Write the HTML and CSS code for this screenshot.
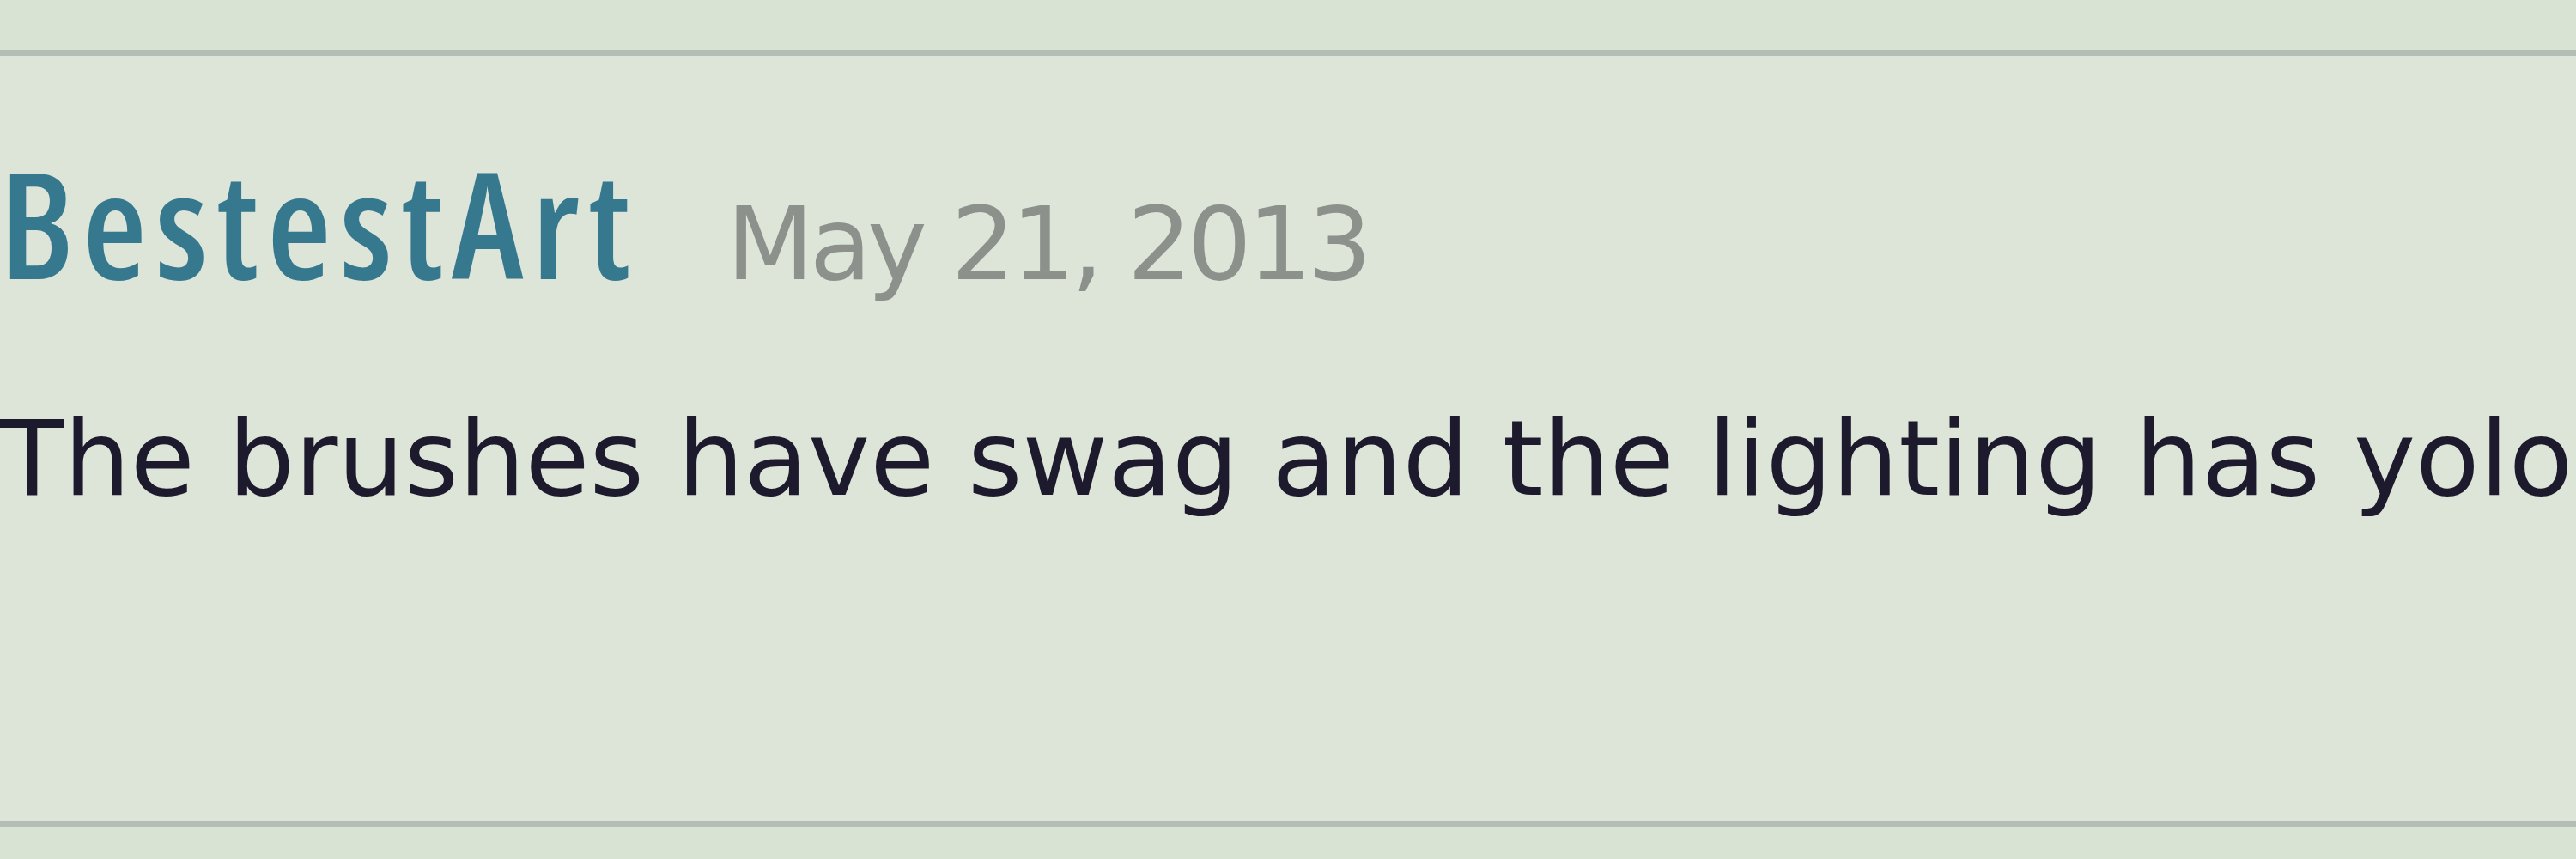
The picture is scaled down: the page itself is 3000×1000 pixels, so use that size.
FILE: index.html
```html
<!DOCTYPE html>
<html>
<head>
<meta charset="utf-8">
<link rel="stylesheet" href="styles.css">
</head>
<body>
<div class="page">
  <div class="above"></div>
  <div class="comment">
    <div class="comment-head">
      <span class="author">BestestArt</span>
      <span class="date">May 21, 2013</span>
    </div>
    <p class="comment-body">The brushes have swag and the lighting has yolo</p>
  </div>
  <div class="below"></div>
</div>
</body>
</html>
```
FILE: styles.css
```css
html, body {
  margin: 0;
  padding: 0;
  background: #dae3d5;
}
.page {
  width: 3000px;
  height: 1000px;
  overflow: hidden;
  display: flex;
  flex-direction: column;
}
.above {
  height: 58px;
  background: #d9e3d3;
}
.comment {
  background: #dde4d8;
  border-top: 7px solid #b5beb5;
  border-bottom: 7px solid #b5beb5;
  padding: 107px 0 361px 0;
}
.comment-head {
  display: flex;
  align-items: baseline;
  gap: 102px;
  line-height: 1;
}
.author {
  font-family: "Open Sans", "Liberation Sans", Arial, sans-serif;
  font-weight: 600;
  font-stretch: 75%;
  font-size: 172px;
  color: #36798f;
  letter-spacing: 10px;
}
.date {
  font-family: "DejaVu Sans", Verdana, sans-serif;
  font-size: 118px;
  color: #8c918c;
  letter-spacing: -5px;
}
.comment-body {
  margin: 129px 0 0 0;
  font-family: "DejaVu Sans", Verdana, sans-serif;
  font-size: 122px;
  line-height: 1;
  color: #1c1a2c;
  white-space: nowrap;
}
.below {
  flex: 1;
  background: #d9e3d3;
}
```
